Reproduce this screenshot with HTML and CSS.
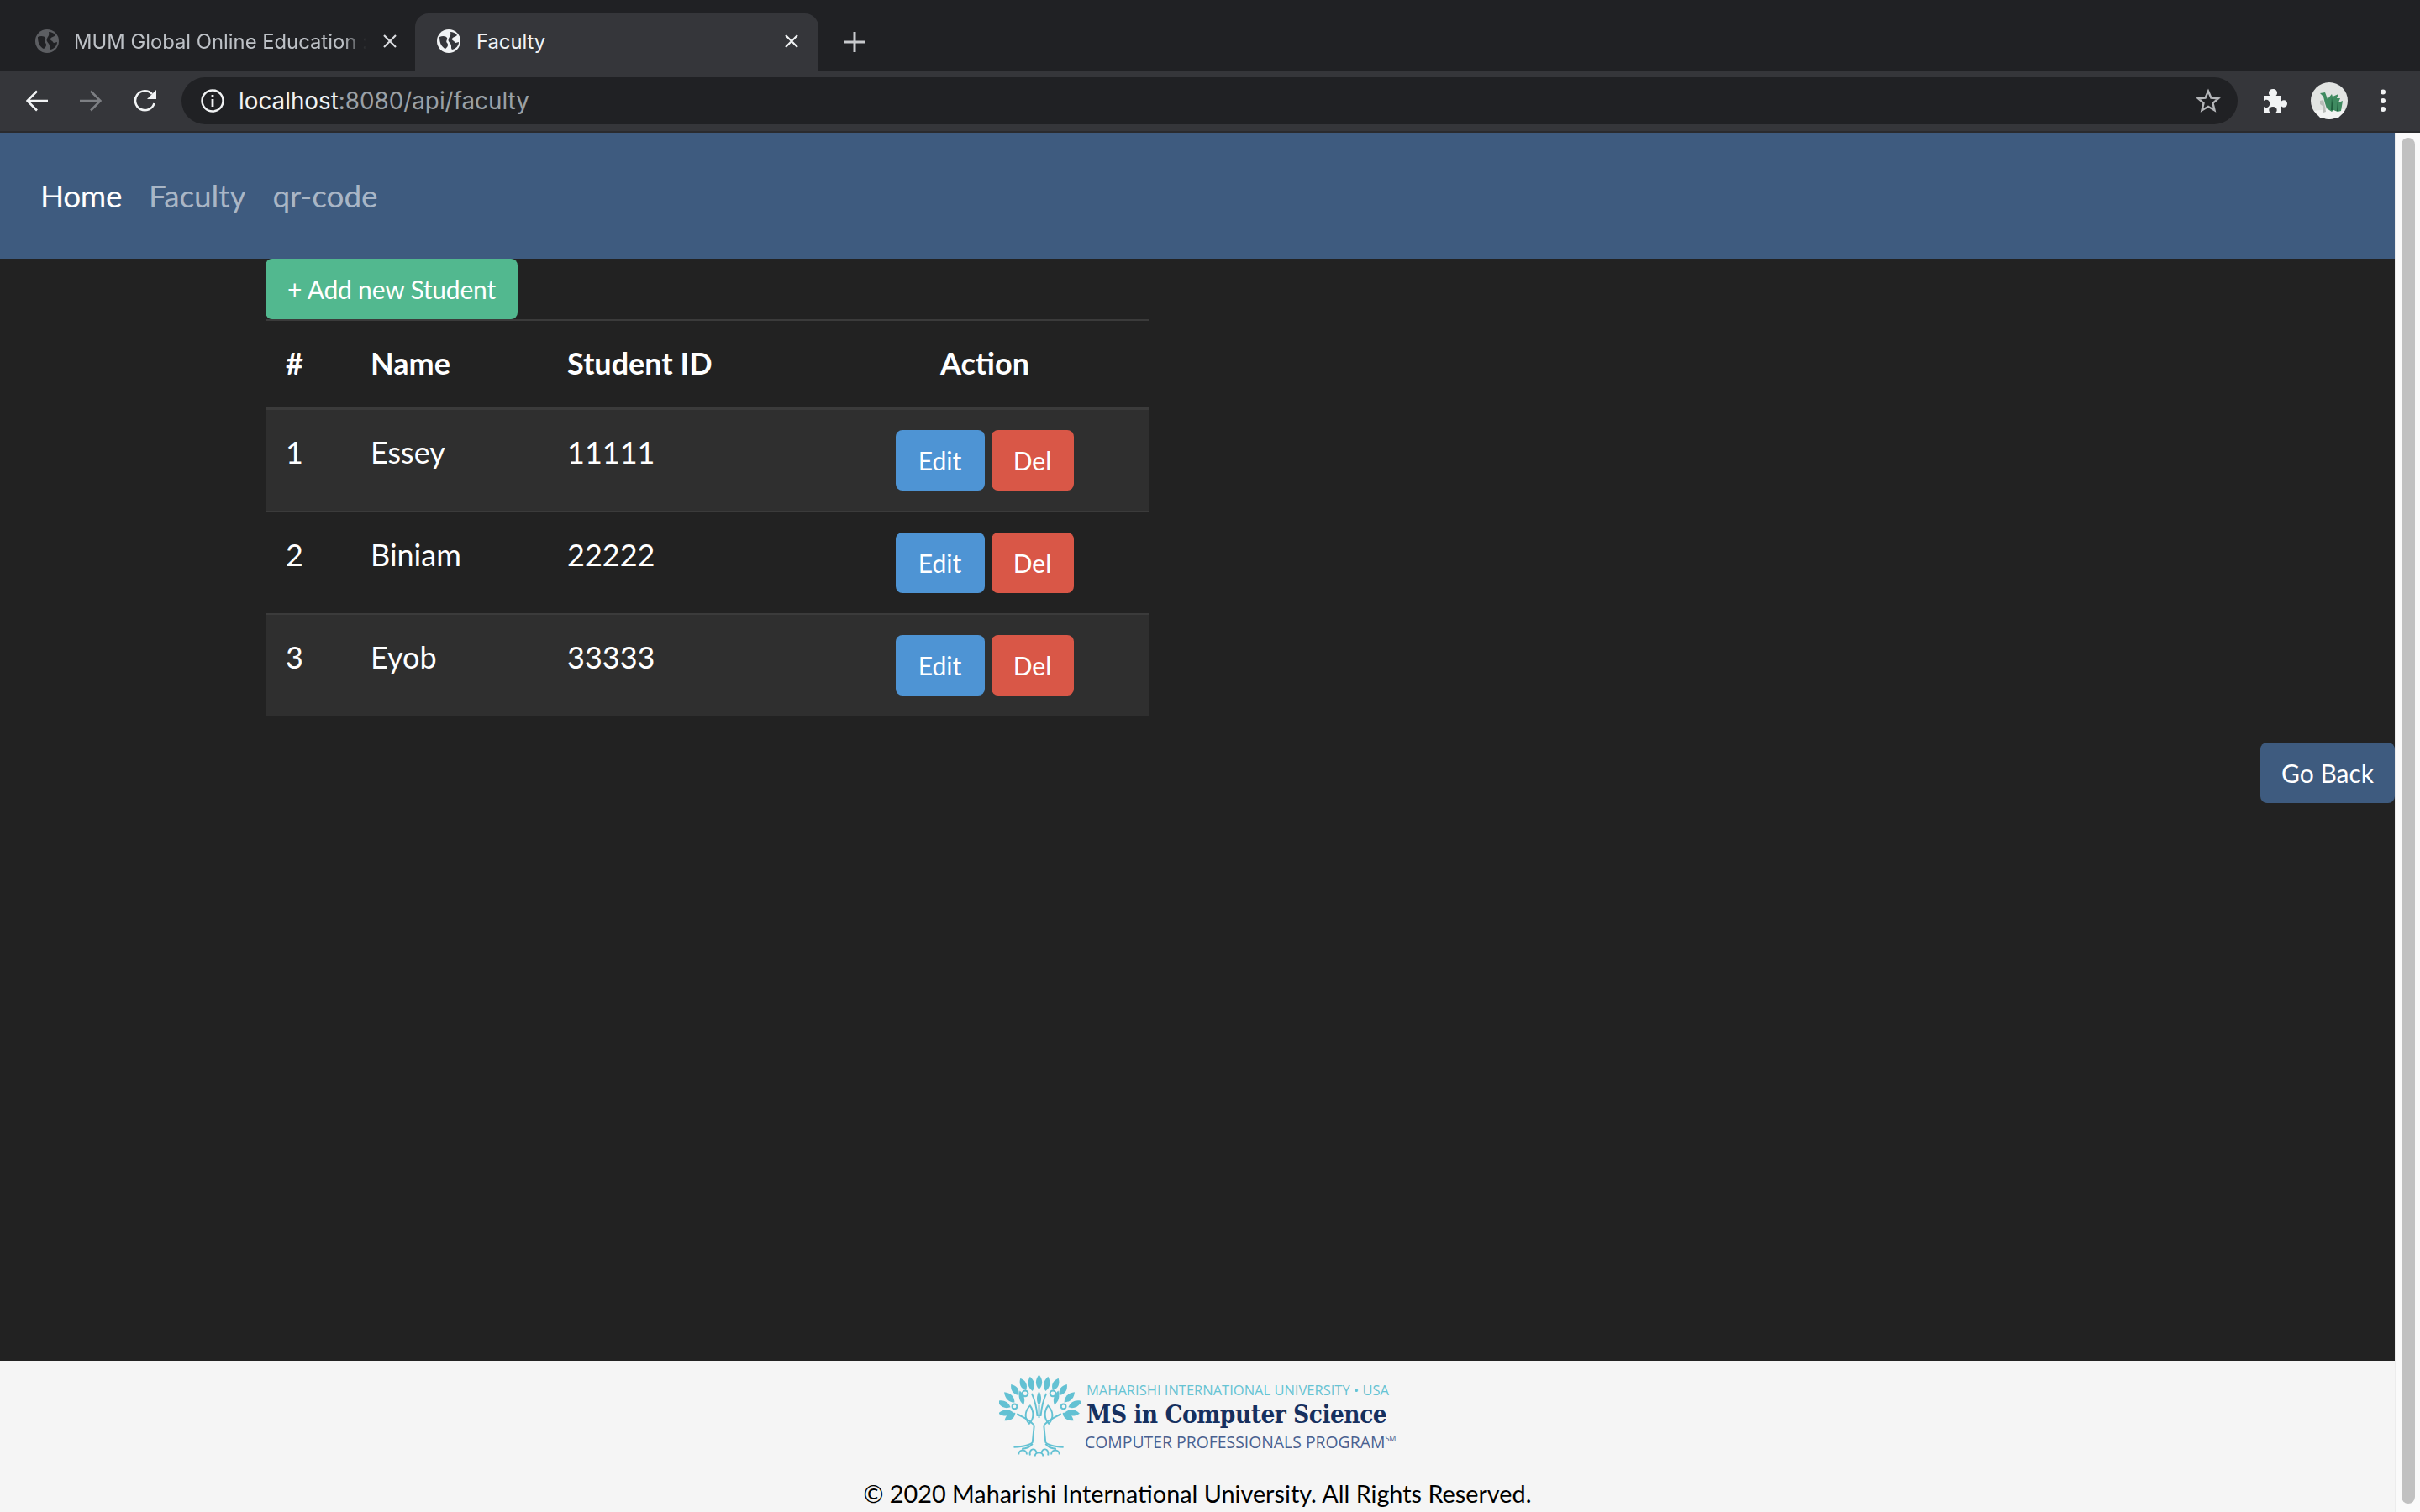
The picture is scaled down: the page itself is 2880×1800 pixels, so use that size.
FILE: index.html
```html
<!DOCTYPE html>
<html lang="en">
<head>
<meta charset="utf-8">
<title>Faculty</title>
<link rel="stylesheet" href="styles.css">
</head>
<body>
<header class="chrome">
  <div class="tabstrip">
    <div class="tab tab-inactive">
      <svg class="globe" viewBox="0 0 28 28"><circle cx="14" cy="14" r="14" fill="#5c5e62"/><path d="M3 9c4-2 8-1 9 1s-2 4 0 6 1 5-2 7c-4-2-7-6-7-14zM16 3c3 0 6 1 8 4-2 2-5 2-6 4s2 2 3 4 3 0 5 0c0 4-3 8-8 9-2-2 0-4-2-7s-3-3-2-6 3-3 2-8z" fill="#202124"/></svg>
      <span class="tab-title tab-title-fade">MUM Global Online Education :</span>
      <svg class="close" viewBox="0 0 18 18"><path d="M2 2l14 14M16 2L2 16" stroke="#dadce0" stroke-width="2.200"/></svg>
    </div>
    <div class="tab tab-active">
      <svg class="globe" viewBox="0 0 28 28"><circle cx="14" cy="14" r="14" fill="#f1f3f4"/><path d="M3 9c4-2 8-1 9 1s-2 4 0 6 1 5-2 7c-4-2-7-6-7-14zM16 3c3 0 6 1 8 4-2 2-5 2-6 4s2 2 3 4 3 0 5 0c0 4-3 8-8 9-2-2 0-4-2-7s-3-3-2-6 3-3 2-8z" fill="#35363a"/></svg>
      <span class="tab-title tab-title-active">Faculty</span>
      <svg class="close" viewBox="0 0 18 18"><path d="M2 2l14 14M16 2L2 16" stroke="#f1f3f4" stroke-width="2.200"/></svg>
    </div>
    <svg class="newtab" viewBox="0 0 24 24"><path d="M12 0v24M0 12h24" stroke="#c8cacd" stroke-width="3"/></svg>
  </div>
  <div class="toolbar">
    <svg class="navicon" viewBox="0 0 26 26"><path d="M26 13H2M13 1.500L1.500 13 13 24.500" fill="none" stroke="#f1f3f4" stroke-width="2.600"/></svg>
    <svg class="navicon" viewBox="0 0 26 26"><path d="M0 13h24M13 1.500L24.500 13 13 24.500" fill="none" stroke="#7d7f83" stroke-width="2.600"/></svg>
    <svg class="navicon" viewBox="0 0 28 28"><path d="M24.500 17a11.500 11.500 0 1 1-2.500-11" fill="none" stroke="#f1f3f4" stroke-width="2.600"/><path d="M27 1v11H16z" fill="#f1f3f4"/></svg>
    <div class="omnibox">
      <svg class="info" viewBox="0 0 28 28"><circle cx="14" cy="14" r="12.500" fill="none" stroke="#f1f3f4" stroke-width="2.400"/><path d="M12.600 12h2.800v9h-2.800zM12.600 7h2.800v3h-2.800z" fill="#f1f3f4"/></svg>
      <span class="url"><span class="url-host">localhost</span>:8080/api/faculty</span>
      <svg class="star" viewBox="0 0 30 30"><path d="M15 3.500l3.400 8 8.600.700-6.500 5.700 2 8.400L15 21.800l-7.500 4.500 2-8.400L3 12.200l8.600-.7z" fill="none" stroke="#b4b6b9" stroke-width="2.400"/></svg>
    </div>
    <svg class="puzzle" viewBox="0 0 28 28"><path d="M0 8h7.500C6.500 7 6 6 6 4.500 6 2 8 0 11 0s5 2 5 4.500C16 6 15.500 7 14.500 8H21v6.500c1-.8 2-1.200 3-1.200 2.500 0 4 2 4 4.200s-1.500 4.200-4 4.200c-1 0-2-.4-3-1.200V28h-6.500c.8-1 1.200-2 1.200-3 0-2.500-2-4-4.700-4s-4.700 1.500-4.700 4c0 1 .4 2 1.200 3H0v-7c1 .8 2 1.200 3 1.200 2.500 0 4.200-2 4.200-4.700S5.500 12.800 3 12.800c-1 0-2 .4-3 1.200z" fill="#f1f3f4"/></svg>
    <svg class="avatar" viewBox="0 0 44 44"><circle cx="22" cy="22" r="22" fill="#e2e4e2"/><path d="M4 34l16-2 20 0 0 3-7 7-11 2-11-2z" fill="#f3f4f3"/><path d="M11 22l4-1 2 8 1 6-3 1-1-8-3-2z" fill="#b9bdb9"/><path d="M11 13l6-1 3 8 5-6 1 3 7-3-2 5 4 0-2 5 5-2-2 12-4 1-5-2-2 2-6-4-2-6-2-8-3-3z" fill="#3f8a60"/><path d="M25 18l2 15-3 0zM32 22l1 12-2 0z" fill="#1f5c3c"/></svg>
    <svg class="dots" viewBox="0 0 6 28"><circle cx="3" cy="3.500" r="3" fill="#f1f3f4"/><circle cx="3" cy="14" r="3" fill="#f1f3f4"/><circle cx="3" cy="24" r="3" fill="#f1f3f4"/></svg>
  </div>
</header>
<div class="viewport">
  <div class="page">
    <nav class="navbar">
      <a class="navlink navlink-active">Home</a>
      <a class="navlink">Faculty</a>
      <a class="navlink">qr-code</a>
    </nav>
    <main class="content">
      <div class="students">
        <a class="btn btn-add">+ Add new Student</a>
        <table class="table">
          <thead>
            <tr><th class="col-num">#</th><th class="col-name">Name</th><th class="col-id">Student ID</th><th class="col-action">Action</th></tr>
          </thead>
          <tbody>
            <tr class="striped"><td>1</td><td>Essey</td><td>11111</td><td class="cell-action"><div class="actions"><a class="btn btn-edit">Edit</a><a class="btn btn-del">Del</a></div></td></tr>
            <tr><td>2</td><td>Biniam</td><td>22222</td><td class="cell-action"><div class="actions"><a class="btn btn-edit">Edit</a><a class="btn btn-del">Del</a></div></td></tr>
            <tr class="striped"><td>3</td><td>Eyob</td><td>33333</td><td class="cell-action"><div class="actions"><a class="btn btn-edit">Edit</a><a class="btn btn-del">Del</a></div></td></tr>
          </tbody>
        </table>
      </div>
      <a class="btn btn-back">Go Back</a>
    </main>
    <footer class="footer">
      <div class="logo">
        <svg class="tree" viewBox="0 0 100 100">
          <defs><path id="leaf" d="M0 0C-5-5-5-12 0-18 5-12 5-5 0 0z"/></defs>
          <g fill="#63c1d3">
            <use href="#leaf" transform="translate(49 17)"/>
            <use href="#leaf" transform="translate(41 19) rotate(-10)"/>
            <use href="#leaf" transform="translate(57 19) rotate(10)"/>
            <use href="#leaf" transform="translate(33 18) rotate(-25) scale(1 .9)"/>
            <use href="#leaf" transform="translate(66 18) rotate(25) scale(1 .9)"/>
            <use href="#leaf" transform="translate(24 24) rotate(-35) scale(1 .9)"/>
            <use href="#leaf" transform="translate(74 24) rotate(35) scale(1 .9)"/>
            <use href="#leaf" transform="translate(19 33) rotate(-45)"/>
            <use href="#leaf" transform="translate(80 33) rotate(45)"/>
            <use href="#leaf" transform="translate(14 39) rotate(-65)"/>
            <use href="#leaf" transform="translate(85 39) rotate(65)"/>
            <use href="#leaf" transform="translate(17 45) rotate(-95)"/>
            <use href="#leaf" transform="translate(81 45) rotate(95)"/>
            <use href="#leaf" transform="translate(20 46) rotate(-125) scale(1 .9)"/>
            <use href="#leaf" transform="translate(78 46) rotate(125) scale(1 .9)"/>
            <use href="#leaf" transform="translate(30 36) rotate(-15) scale(.8 1)"/>
            <use href="#leaf" transform="translate(68 36) rotate(15) scale(.8 1)"/>
            <use href="#leaf" transform="translate(49 37) scale(.7 1)"/>
          </g>
          <g fill="#f5f5f5" stroke="#63c1d3" stroke-width="2">
            <path d="M37 59C31 53 31 44 38 37 43 44 43 53 37 59z"/>
            <path d="M61 59C67 53 67 44 60 37 55 44 55 53 61 59z"/>
            <circle cx="32" cy="22" r="3.500"/><circle cx="66" cy="22" r="3.500"/>
            <circle cx="19" cy="38" r="3"/><circle cx="79" cy="38" r="3"/>
          </g>
          <g fill="none" stroke="#63c1d3" stroke-width="2">
            <path d="M43 62L41 82C38 86 30 87 18 88M55 62L57 82C60 86 68 87 79 88"/>
            <path d="M43 62C40 55 30 52 22 47M55 62C58 55 68 52 76 47M47 50C46 40 44 30 40 22M51 50C52 40 54 30 58 22M49 52V36"/>
            <path d="M24 97C24 90 34 90 34 97M38 98C36 89 46 88 46 96M52 96C52 88 62 89 60 98M64 97C64 90 74 90 74 97M44 99C44 93 54 93 54 99M41 84C37 89 32 90 28 90M57 84C61 89 66 90 70 90"/>
          </g>
        </svg>
        <div class="logo-text">
          <span class="logo-uni">MAHARISHI INTERNATIONAL UNIVERSITY • USA</span>
          <span class="logo-ms">MS in Computer Science</span>
          <span class="logo-cpp">COMPUTER PROFESSIONALS PROGRAM<sup class="logo-sm">SM</sup></span>
        </div>
      </div>
      <p class="copyright">© 2020 Maharishi International University. All Rights Reserved.</p>
    </footer>
  </div>
  <div class="scrollbar"><div class="thumb"></div></div>
</div>
</body>
</html>
```
FILE: styles.css
```css
* { box-sizing: border-box; }
html, body { margin: 0; height: 100%; overflow: hidden; }
body { display: flex; flex-direction: column; background: #222; font-family: Lato, "Open Sans", sans-serif; color: #fff; }

.chrome { flex: none; height: 158px; display: flex; flex-direction: column; background: #35363a; border-bottom: 2px solid #2a2b2e; }
.tabstrip { height: 84px; background: #202124; display: flex; align-items: flex-end; }
.tab { height: 68px; display: flex; align-items: center; padding-bottom: 2px; font-family: Inter, "Noto Sans", sans-serif; font-size: 23.800px; }
.tab-inactive { width: 494px; padding-left: 42px; padding-right: 21px; }
.tab-active { width: 480px; padding-left: 26px; padding-right: 23px; background: #35363a; border-radius: 16px 16px 0 0; }
.globe { width: 28px; height: 28px; flex: none; }
.tab-title { margin-left: 18px; flex: 1; width: 0; white-space: nowrap; overflow: hidden; color: #bdc1c6; }
.tab-title-fade { margin-right: 12px; -webkit-mask-image: linear-gradient(to right, #000 90%, transparent 98%); mask-image: linear-gradient(to right, #000 90%, transparent 98%); }
.tab-title-active { margin-left: 19px; color: #f1f3f4; }
.close { width: 18px; height: 18px; flex: none; }
.newtab { width: 24px; height: 24px; margin-left: 31px; margin-bottom: 22px; flex: none; }

.toolbar { height: 72px; display: flex; align-items: center; padding-left: 31px; }
.navicon { width: 26px; height: 26px; margin-right: 38px; flex: none; }
.navicon:nth-child(3) { width: 28px; height: 28px; margin-right: 29px; }
.omnibox { width: 2447px; height: 56px; margin-top: 0; background: #202124; border-radius: 28px; display: flex; align-items: center; padding-left: 23px; padding-right: 20px; }
.info { width: 28px; height: 28px; flex: none; }
.url { margin-left: 17px; flex: 1; font-family: Inter, "Noto Sans", sans-serif; font-size: 27.800px; color: #9aa0a6; white-space: nowrap; }
.url-host { color: #f1f3f4; }
.star { width: 30px; height: 30px; flex: none; }
.puzzle { width: 28px; height: 28px; margin-left: 31px; flex: none; }
.avatar { width: 44px; height: 44px; margin-left: 28px; flex: none; }
.dots { width: 6px; height: 28px; margin-left: 39px; flex: none; }

.viewport { flex: 1; display: flex; min-height: 0; }
.page { flex: 1; min-width: 0; display: flex; flex-direction: column; }
.scrollbar { width: 30px; flex: none; background: #fafafa; border-left: 2px solid #ececec; padding: 6px 6px 10px 6px; display: flex; }
.thumb { flex: 1; background: #c1c1c1; border-radius: 8px; }

.navbar { height: 150px; flex: none; background: #3e5b7f; display: flex; align-items: center; padding-left: 48px; padding-bottom: 2px; gap: 32px; }
.navlink { font-size: 37px; color: #a9b6c6; letter-spacing: -0.100px; }
.navlink-active { color: #fff; letter-spacing: -0.400px; }

.content { flex: 1; min-height: 0; display: flex; flex-direction: column; }
.students { width: 1051px; margin-left: 316px; }
.btn { display: flex; align-items: center; justify-content: center; height: 72px; border-radius: 8px; color: #fff; font-size: 30px; }
.btn-add { width: 300px; background: #52b88f; letter-spacing: -0.200px; }
.table { width: 1051px; border-collapse: separate; border-spacing: 0; table-layout: fixed; font-size: 36px; }
.table th, .table td { padding: 24px 24px 26px; line-height: 52px; text-align: left; vertical-align: top; }
.table th { font-weight: 700; border-top: 2px solid #3b3b3b; border-bottom: 4px solid #3b3b3b; }
.table tbody tr + tr td { border-top: 2px solid #3b3b3b; }
.table .col-num { width: 101px; }
.table .col-name { width: 234px; }
.table .col-id { width: 326px; }
.table .col-action { text-align: center; }
.table .cell-action { padding-bottom: 24px; }
.striped { background: #2f2f2f; }
.actions { display: flex; justify-content: center; gap: 8px; padding-right: 1px; }
.btn-edit { width: 106px; background: #4e94d4; }
.btn-del { width: 98px; background: #d95747; }
.btn-back { width: 160px; margin-top: 32px; align-self: flex-end; background: #3e5b7f; }

.footer { height: 180px; flex: none; background: #f5f5f5; display: flex; flex-direction: column; align-items: center; color: #000; }
.logo { display: flex; margin-top: 16px; height: 100px; margin-right: 3px; }
.tree { width: 97px; height: 100px; flex: none; }
.logo-text { display: flex; flex-direction: column; width: 365px; margin-left: 7px; }
.logo-uni { font-family: "Open Sans", sans-serif; font-size: 16.500px; line-height: 22px; color: #66c3d3; margin-top: 8px; white-space: nowrap; }
.logo-ms { font-family: "DejaVu Serif", serif; font-stretch: condensed; font-weight: 700; font-size: 29.500px; line-height: 36px; letter-spacing: -0.500px; color: #16305f; white-space: nowrap; }
.logo-cpp { font-family: "Open Sans", sans-serif; font-size: 19.400px; line-height: 24px; color: #4a6190; margin-left: -2px; margin-top: 3px; white-space: nowrap; }
.logo-sm { font-size: 9px; line-height: 0; vertical-align: 8px; }
.copyright { margin: 22px 0 0; font-size: 28.800px; line-height: 40px; white-space: nowrap; }
```
